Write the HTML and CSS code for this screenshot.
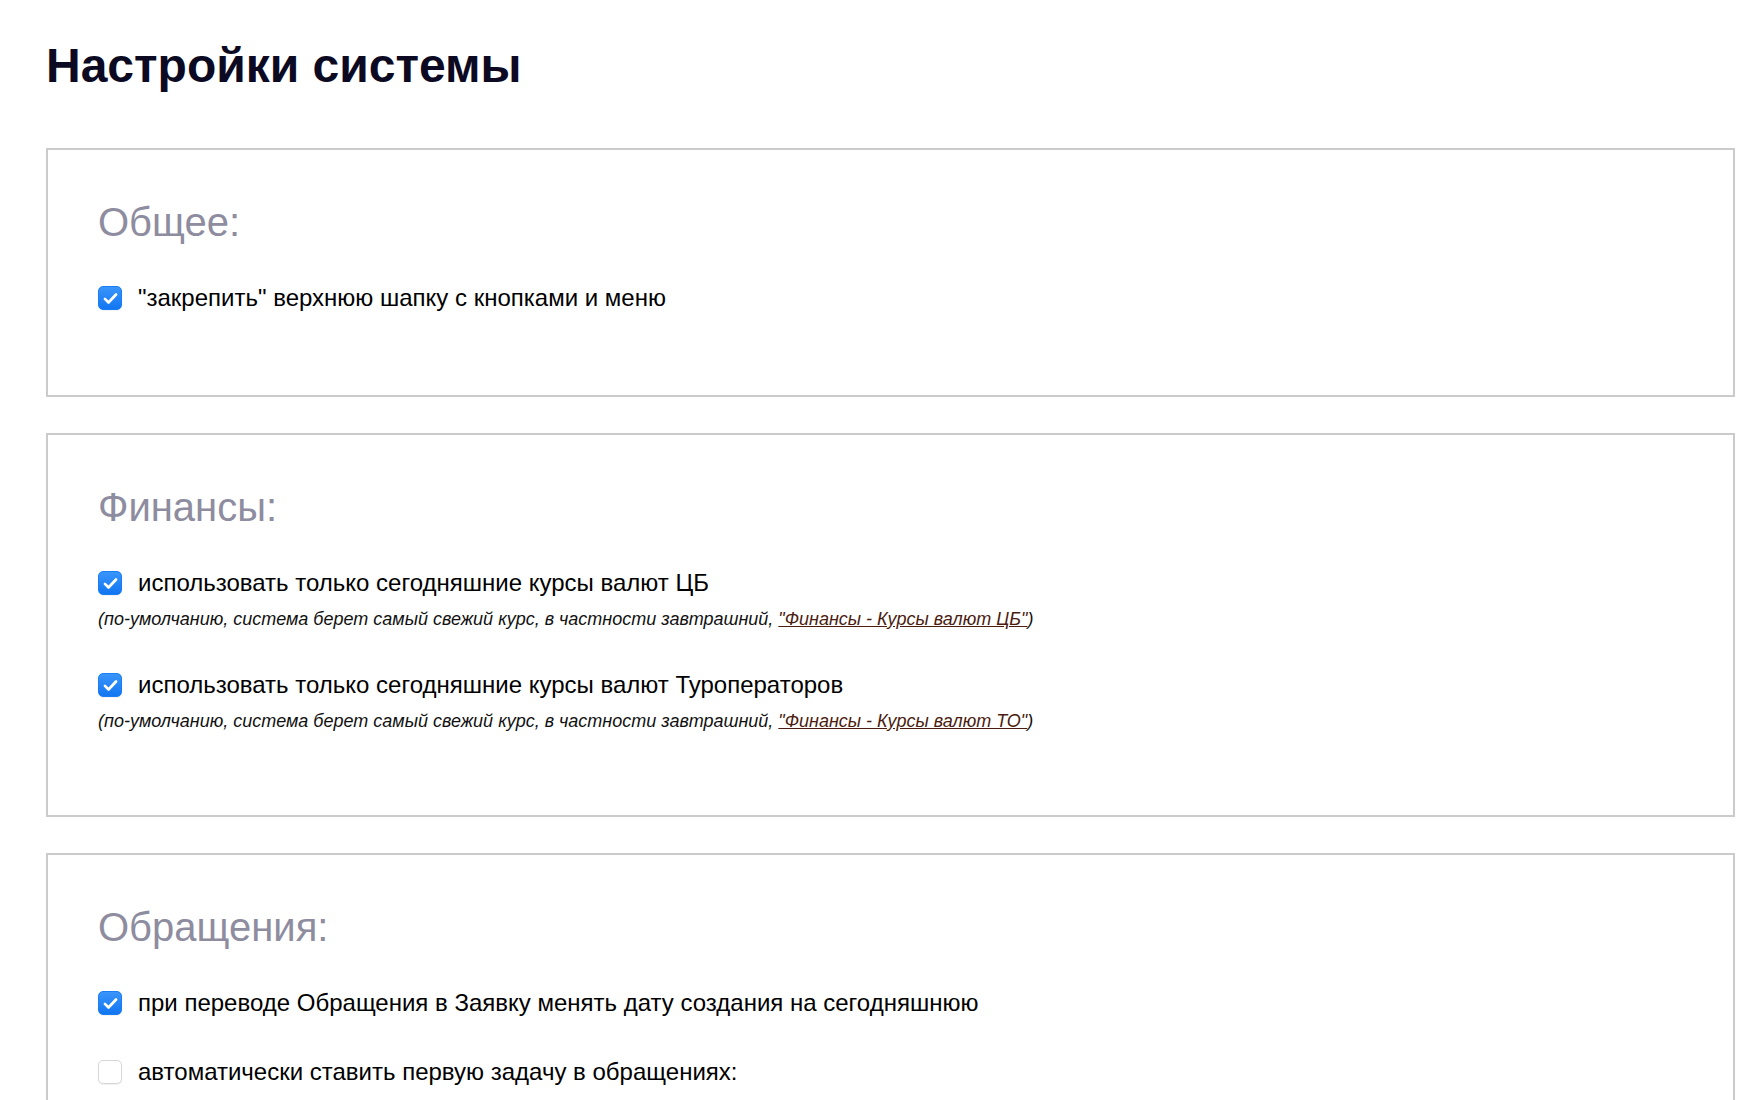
FILE: index.html
```html
<!DOCTYPE html>
<html>
  <head>
    <meta charset="utf-8">
    <title>Настройки системы</title>
    <link rel="stylesheet" href="styles.css">
  </head>
  <body class="body">
    <h1 class="page-title">Настройки системы</h1>

    <div class="panel">
      <h2 class="panel-title">Общее:</h2>
      <div class="option">
        <label class="check-row">
          <span class="box checked"><svg viewBox="0 0 24 24" width="19" height="19"><path d="M5 12.5l4.5 4.5L19 7" fill="none" stroke="#fff" stroke-width="3.4" stroke-linecap="round" stroke-linejoin="round"/></svg></span>
          "закрепить" верхнюю шапку с кнопками и меню
        </label>
      </div>
    </div>

    <div class="panel">
      <h2 class="panel-title">Финансы:</h2>
      <div class="option">
        <label class="check-row">
          <span class="box checked"><svg viewBox="0 0 24 24" width="19" height="19"><path d="M5 12.5l4.5 4.5L19 7" fill="none" stroke="#fff" stroke-width="3.4" stroke-linecap="round" stroke-linejoin="round"/></svg></span>
          использовать только сегодняшние курсы валют ЦБ
        </label>
        <div class="note">(по-умолчанию, система берет самый свежий курс, в частности завтрашний, <a href="#" class="note-link">"Финансы - Курсы валют ЦБ"</a>)</div>
      </div>
      <div class="option">
        <label class="check-row">
          <span class="box checked"><svg viewBox="0 0 24 24" width="19" height="19"><path d="M5 12.5l4.5 4.5L19 7" fill="none" stroke="#fff" stroke-width="3.4" stroke-linecap="round" stroke-linejoin="round"/></svg></span>
          использовать только сегодняшние курсы валют Туроператоров
        </label>
        <div class="note">(по-умолчанию, система берет самый свежий курс, в частности завтрашний, <a href="#" class="note-link">"Финансы - Курсы валют ТО"</a>)</div>
      </div>
    </div>

    <div class="panel">
      <h2 class="panel-title">Обращения:</h2>
      <div class="option">
        <label class="check-row">
          <span class="box checked"><svg viewBox="0 0 24 24" width="19" height="19"><path d="M5 12.5l4.5 4.5L19 7" fill="none" stroke="#fff" stroke-width="3.4" stroke-linecap="round" stroke-linejoin="round"/></svg></span>
          при переводе Обращения в Заявку менять дату создания на сегодняшнюю
        </label>
      </div>
      <div class="option">
        <label class="check-row">
          <span class="box"></span>
          автоматически ставить первую задачу в обращениях:
        </label>
      </div>
    </div>
  </body>
</html>
```

FILE: styles.css
```css
.body {
  margin: 0;
  padding: 0 19px 0 46px;
  font-family: "Liberation Sans", Arial, sans-serif;
  background: #fff;
  color: #000;
}
.page-title {
  margin: 0;
  padding-top: 38px;
  font-size: 48px;
  line-height: 56px;
  font-weight: bold;
  color: #0b0a22;
}
.panel {
  border: 2px solid #cbcbcb;
  margin-top: 36px;
  padding: 48px 50px 46px;
}
.page-title + .panel {
  margin-top: 54px;
}
.panel-title {
  margin: 0 0 34px;
  font-size: 40px;
  line-height: 48px;
  font-weight: normal;
  color: #8e8c9f;
}
.option {
  margin-bottom: 33px;
}
.check-row {
  display: flex;
  align-items: center;
  gap: 16px;
  height: 36px;
  font-size: 24px;
  cursor: pointer;
}
.box {
  width: 22px;
  height: 22px;
  flex: none;
  border: 1px solid #d6d6d6;
  border-radius: 5px;
  background: #fff;
  display: flex;
  align-items: center;
  justify-content: center;
  box-shadow: 0 1px 1px rgba(0, 0, 0, 0.06);
}
.box.checked {
  border-color: #1a7ff5;
  background: linear-gradient(#3a95fb, #1276f2);
}
.note {
  margin-top: 7px;
  padding-bottom: 4px;
  font-size: 18px;
  line-height: 22px;
  font-style: italic;
  color: #111;
}
.note-link {
  color: #4b1c10;
  text-decoration: underline;
}
```
